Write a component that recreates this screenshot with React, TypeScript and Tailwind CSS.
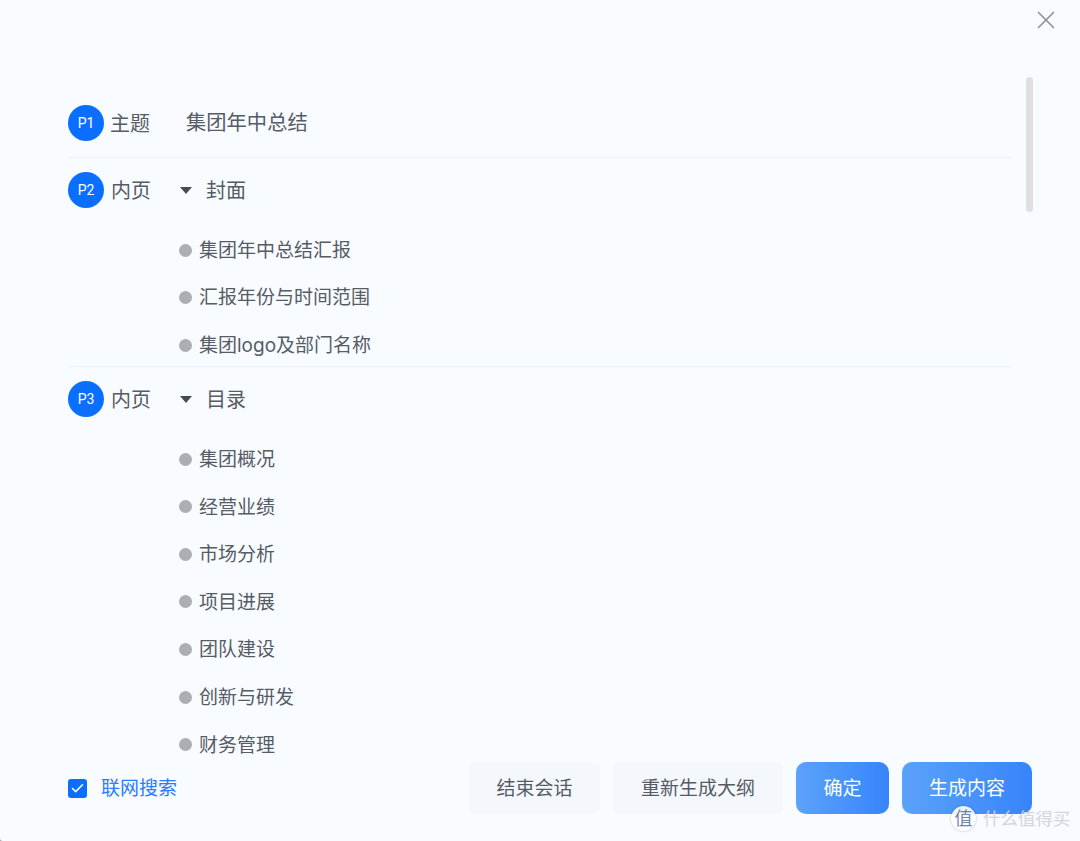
import { Check, X } from "lucide-react";

const cjk = "font-['Inter','Noto_Sans_CJK_SC',sans-serif]";

interface Page {
  no: string;
  kind: string;
  title: string;
  items: string[];
}

const pages: Page[] = [
  { no: "P2", kind: "内页", title: "封面", items: ["集团年中总结汇报", "汇报年份与时间范围", "集团logo及部门名称"] },
  {
    no: "P3",
    kind: "内页",
    title: "目录",
    items: ["集团概况", "经营业绩", "市场分析", "项目进展", "团队建设", "创新与研发", "财务管理"],
  },
];

function PageBadge({ no }: { no: string }) {
  return (
    <span className="flex h-9 w-9 shrink-0 items-center justify-center rounded-full bg-[#0a6fff] font-['Roboto',sans-serif] text-[14px] text-white">
      {no}
    </span>
  );
}

function PageSection({ page }: { page: Page }) {
  return (
    <section className="border-b border-[#e9f2fd] pb-[9px] pt-[14px]">
      <div className="flex h-9 items-center">
        <PageBadge no={page.no} />
        <span className="ml-[7px] w-[69px] pt-[1px] text-[20px] text-[#565c66]">{page.kind}</span>
        <span className="mt-[1px] h-0 w-0 border-x-[6px] border-t-[7px] border-x-transparent border-t-[#454b57]" />
        <span className="ml-[14px] pt-[1px] text-[20px] text-[#565c66]">{page.title}</span>
      </div>
      <ul className="ml-[111px] mt-[30px] flex flex-col gap-[23.6px]">
        {page.items.map((item) => (
          <li key={item} className="flex h-6 items-center text-[19px] text-[#565c66]">
            <span className="h-[13px] w-[13px] shrink-0 rounded-full bg-[#abaeb4]" />
            <span className="ml-[7px] whitespace-nowrap pt-[2px]">{item}</span>
          </li>
        ))}
      </ul>
    </section>
  );
}

export default function App() {
  return (
    <div className="h-[841px] w-[1080px] bg-[#a8a8a8]">
      <div className={`relative flex h-[841px] w-[1080px] flex-col overflow-hidden rounded-bl-[3px] bg-[#f8fbff] ${cjk}`}>
        <div className="flex h-[40px] justify-end pr-[19px] pt-[5px]">
          <X className="h-[30px] w-[30px] text-[#8f949c]" strokeWidth={1.4} />
        </div>

        <div className="ml-[68px] mr-[68px] h-[722px] overflow-hidden pt-[65px]">
          <section className="border-b border-[#e9f2fd] pb-[16px]">
            <div className="flex h-9 items-center">
              <PageBadge no="P1" />
              <span className="ml-[6px] w-[76px] pt-[1px] text-[20px] text-[#565c66]">主题</span>
              <span className="pt-[1px] text-[20.3px] text-[#565c66]">集团年中总结</span>
            </div>
          </section>
          {pages.map((page) => (
            <PageSection key={page.no} page={page} />
          ))}
        </div>

        <footer className="flex h-[52px] items-center pl-[68px] pr-[48px]">
          <span className="flex h-[19px] w-[19px] items-center justify-center rounded-[3px] bg-[#0a6fff]">
            <Check className="h-[15px] w-[15px] text-white" strokeWidth={2.5} />
          </span>
          <span className="ml-[14px] pt-[2px] text-[19px] text-[#2a7bff]">联网搜索</span>
          <div className="ml-auto flex gap-[13px] text-[19px]">
            <button className="h-[52px] w-[131px] rounded-[6px] bg-[#f4f8fd] pt-[2px] text-[#565c66]">结束会话</button>
            <button className="h-[52px] w-[170px] rounded-[6px] bg-[#f4f8fd] pt-[2px] text-[#565c66]">重新生成大纲</button>
            <button className="h-[52px] w-[93px] rounded-[10px] bg-gradient-to-r from-[#5ba2f9] to-[#3784fb] pt-[2px] text-white">确定</button>
            <button className="h-[52px] w-[130px] rounded-[10px] bg-gradient-to-r from-[#5ba2f9] to-[#3784fb] pt-[2px] text-white">生成内容</button>
          </div>
        </footer>

        {/* scrollbar thumb */}
        <div className="absolute left-[1026px] top-[77px] h-[135px] w-[7px] rounded-full bg-[#dfdfdf]" />

        {/* watermark */}
        <div className="absolute left-[951px] top-[806px] flex items-center">
          <span className="flex h-[25px] w-[25px] items-center justify-center rounded-full bg-white/90 text-[18px] leading-none text-[#6f84a6] shadow-[0_0_2px_rgba(0,0,0,0.35)]">
            值
          </span>
          <span className="ml-[7px] text-[17.5px] leading-none text-[#d3d6da]">什么值得买</span>
        </div>
      </div>
    </div>
  );
}
